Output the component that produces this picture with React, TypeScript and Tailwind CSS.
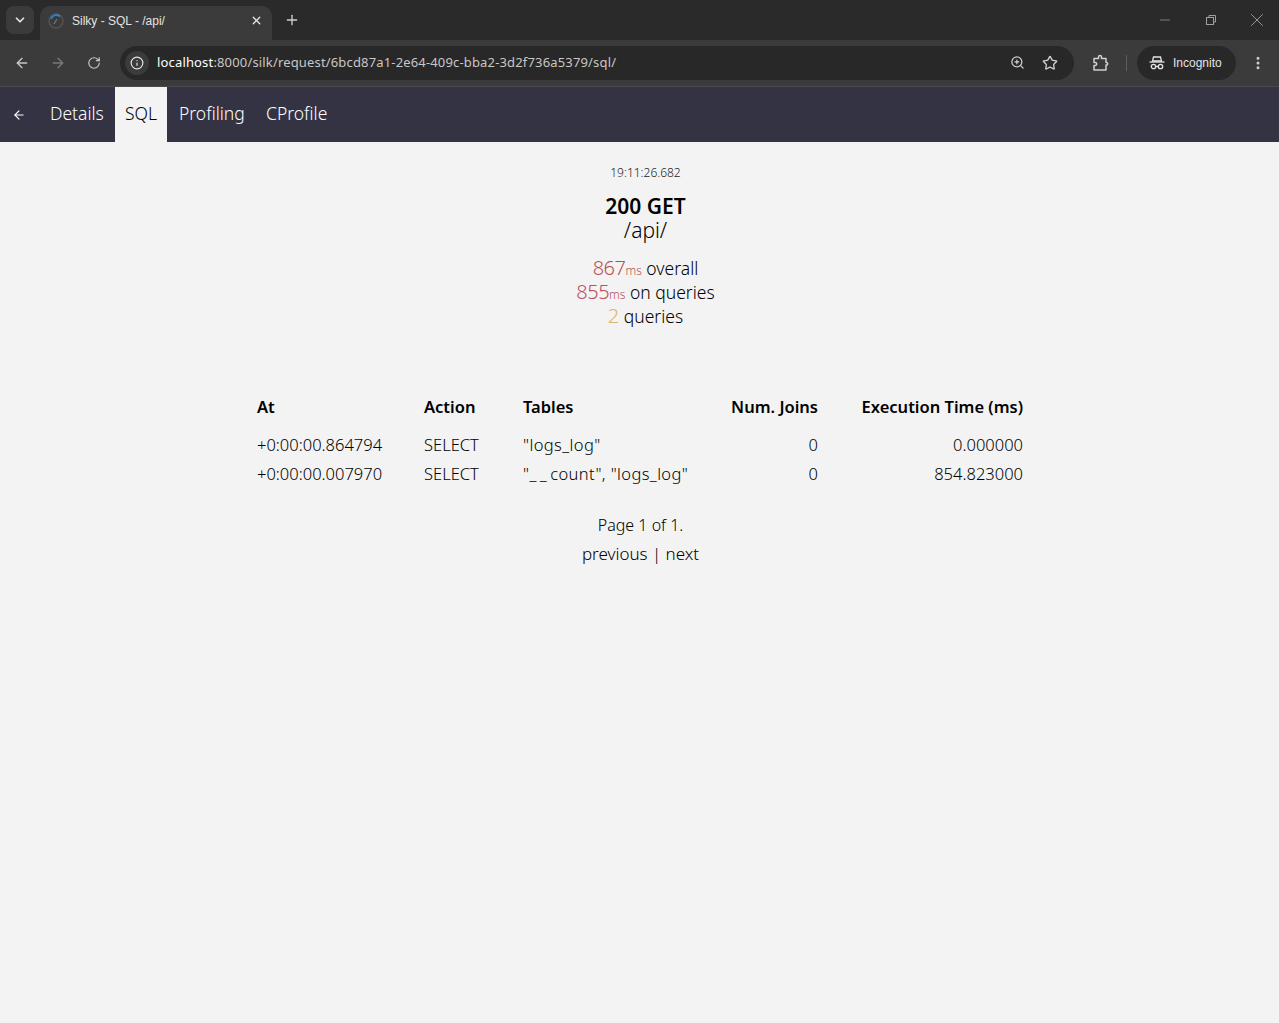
import { ArrowLeft, ArrowRight, ChevronDown, Info, Minus, MoreVertical, Plus, RotateCw, Star, X, ZoomIn } from "lucide-react";

const font = "font-['Noto_Sans',sans-serif]";

const rows = [
  { at: "+0:00:00.864794", action: "SELECT", tables: <>"logs_log"</>, joins: "0", time: "0.000000" },
  {
    at: "+0:00:00.007970",
    action: "SELECT",
    tables: (
      <>
        "<span className="tracking-[3.5px]">__</span>count", "logs_log"
      </>
    ),
    joins: "0",
    time: "854.823000",
  },
];

function IncognitoIcon() {
  return (
    <svg width="16" height="14" viewBox="0 0 16 14" fill="none" stroke="#e3e3e3" strokeWidth="1.3">
      <path d="M4.5 1h7l1 4h-9z" />
      <path d="M0.5 6h15" />
      <circle cx="4.5" cy="10.5" r="2.2" />
      <circle cx="11.5" cy="10.5" r="2.2" />
      <path d="M6.7 10.5h2.6" />
    </svg>
  );
}

function ExtensionIcon() {
  return (
    <svg width="18" height="18" viewBox="0 0 18 18" fill="none" stroke="#d0d0d0" strokeWidth="1.5" className="ml-[18px]">
      <path d="M2 4.5h4.5V3a1.5 1.5 0 0 1 3 0v1.5H14v4h1a1.5 1.5 0 0 1 0 2.5h-1v5H2v-4.5h1.2a1.5 1.5 0 0 0 0-3H2z" strokeLinejoin="round" />
    </svg>
  );
}

function BrowserChrome() {
  return (
    <div className="font-['Liberation_Sans',sans-serif]">
      <div className="h-10 bg-[#2a2a2a] flex items-end pl-[6px]">
        <div className="w-[28px] h-[28px] mb-[6px] rounded-lg bg-[#3b3b3b] flex items-center justify-center">
          <ChevronDown size={14} strokeWidth={3} className="text-[#e3e3e3]" />
        </div>
        <div className="ml-[6px] w-[232px] h-[34px] bg-[#3b3b3b] rounded-t-[10px] flex items-center pl-[8px] pr-[9px] pb-[5px]">
          <svg width="16" height="16" viewBox="0 0 16 16" fill="none">
            <circle cx="8" cy="8" r="7" stroke="#555" strokeWidth="1.4" />
            <path d="M3 6a5.5 5.5 0 0 1 9-2.5" stroke="#2f7fd6" strokeWidth="1.8" />
            <path d="M6 11l3-5" stroke="#777" strokeWidth="1.2" />
          </svg>
          <span className="ml-[8px] text-xs text-[#e3e3e3] flex-1">Silky - SQL - /api/</span>
          <X size={13} strokeWidth={2.5} className="text-[#e3e3e3]" />
        </div>
        <div className="ml-[12px] mb-[12px] text-[#d0d0d0]">
          <Plus size={16} strokeWidth={2} />
        </div>
        <div className="ml-auto flex items-center gap-[30px] pr-[11px] mb-[9px] text-[#a0a0a0]">
          <Minus size={16} strokeWidth={1} />
          <svg width="16" height="16" viewBox="0 0 16 16" fill="none" stroke="#a0a0a0">
            <rect x="3.5" y="5.5" width="7" height="7" />
            <path d="M6 5V3.5h6.5V10H11" />
          </svg>
          <X size={22} strokeWidth={1} className="-ml-[3px]" />
        </div>
      </div>
      <div className="h-[47px] bg-[#3b3b3b] flex items-center pl-[14px] pb-px border-b border-[#4a4a4a]">
        <ArrowLeft size={16} strokeWidth={2} className="text-[#c7c7c7]" />
        <ArrowRight size={16} strokeWidth={2} className="ml-[20px] text-[#7a7a7a]" />
        <RotateCw size={14} strokeWidth={2} className="ml-[21px] text-[#c7c7c7]" />
        <div className="ml-[19px] w-[954px] h-[34px] rounded-full bg-[#282828] flex items-center pl-[5px] pr-[16px]">
          <div className="w-[24px] h-[24px] rounded-full bg-[#3b3b3b] flex items-center justify-center">
            <Info size={14} className="text-[#e3e3e3]" />
          </div>
          <span className={`ml-[8px] text-[13px] tracking-[0.16px] flex-1 text-[#c7c7c7] ${font}`}>
            <span className="text-white">localhost</span>:8000/silk/request/6bcd87a1-2e64-409c-bba2-3d2f736a5379/sql/
          </span>
          <ZoomIn size={15} className="text-[#d0d0d0]" />
          <Star size={16} strokeWidth={2} className="ml-[17px] text-[#d0d0d0]" />
        </div>
        <ExtensionIcon />
        <div className="ml-[16px] w-px h-[16px] bg-[#5e5e5e]" />
        <div className="ml-[10px] w-[99px] h-[34px] rounded-full bg-[#282828] flex items-center pl-[12px]">
          <IncognitoIcon />
          <span className="ml-[8px] text-xs text-[#e3e3e3]">Incognito</span>
        </div>
        <MoreVertical size={16} strokeWidth={2.5} className="ml-[14px] text-[#d0d0d0]" />
      </div>
    </div>
  );
}

function Nav() {
  return (
    <div className="h-[55px] bg-[#333344] flex items-center text-[17.5px] font-light">
      <div className="w-[39px] pl-[12px] text-white">
        <ArrowLeft size={14} strokeWidth={2} />
      </div>
      <div className="h-full w-[76px] flex items-center pl-[11px] pb-[2px] text-white">Details</div>
      <div className="h-full w-[52px] flex items-center justify-center pb-[2px] bg-[#f3f3f3] text-black">SQL</div>
      <div className="h-full w-[87px] flex items-center pl-[12px] pb-[2px] text-white">Profiling</div>
      <div className="h-full flex items-center pl-[12px] pb-[2px] text-white">CProfile</div>
    </div>
  );
}

export default function App() {
  return (
    <div className={`min-h-[1023px] bg-[#f3f3f3] text-black ${font}`}>
      <BrowserChrome />
      <Nav />
      <div className="w-[1291px] flex flex-col items-center">
        <div className="mt-[22px] text-xs font-light leading-[17px] text-[#222]">19:11:26.682</div>
        <div className="mt-[13px] text-[21px] font-semibold leading-[24px]">200 GET</div>
        <div className="text-[21px] font-light leading-[24px]">/api/</div>
        <div className="mt-[14px] text-[17.5px] font-light leading-[24px] text-center">
          <div>
            <span className="text-[20px] tracking-[-0.5px] text-[#b54f4f]">867</span>
            <span className="text-xs text-[#b54f4f]">ms</span> overall
          </div>
          <div>
            <span className="text-[20px] tracking-[-0.5px] text-[#bd4f5a]">855</span>
            <span className="text-xs text-[#bd4f5a]">ms</span> on queries
          </div>
          <div>
            <span className="text-[20px] text-[#dcb46e]">2</span> queries
          </div>
        </div>
      </div>
      <table className="mt-[65px] ml-[257px] w-[766px] table-fixed text-[16.5px] font-light">
        <thead>
          <tr className="h-[38px]">
            <th className="pb-[9px] text-left font-semibold w-[167px]">At</th>
            <th className="pb-[9px] text-left font-semibold w-[99px]">Action</th>
            <th className="pb-[9px] text-left font-semibold w-[175px]">Tables</th>
            <th className="pb-[9px] text-right font-semibold w-[120px]">Num. Joins</th>
            <th className="pb-[9px] text-right font-semibold w-[205px]">Execution Time (ms)</th>
          </tr>
        </thead>
        <tbody>
          {rows.map((row) => (
            <tr key={row.at} className="h-[29px]">
              <td>{row.at}</td>
              <td>{row.action}</td>
              <td className="tracking-[0.4px]">{row.tables}</td>
              <td className="text-right">{row.joins}</td>
              <td className="text-right">{row.time}</td>
            </tr>
          ))}
        </tbody>
      </table>
      <div className="mt-[24px] w-[1281px] text-center font-light leading-[29px]">
        <div className="text-base">Page 1 of 1.</div>
        <div className="text-[17px] mt-[2px]">previous | next</div>
      </div>
    </div>
  );
}
